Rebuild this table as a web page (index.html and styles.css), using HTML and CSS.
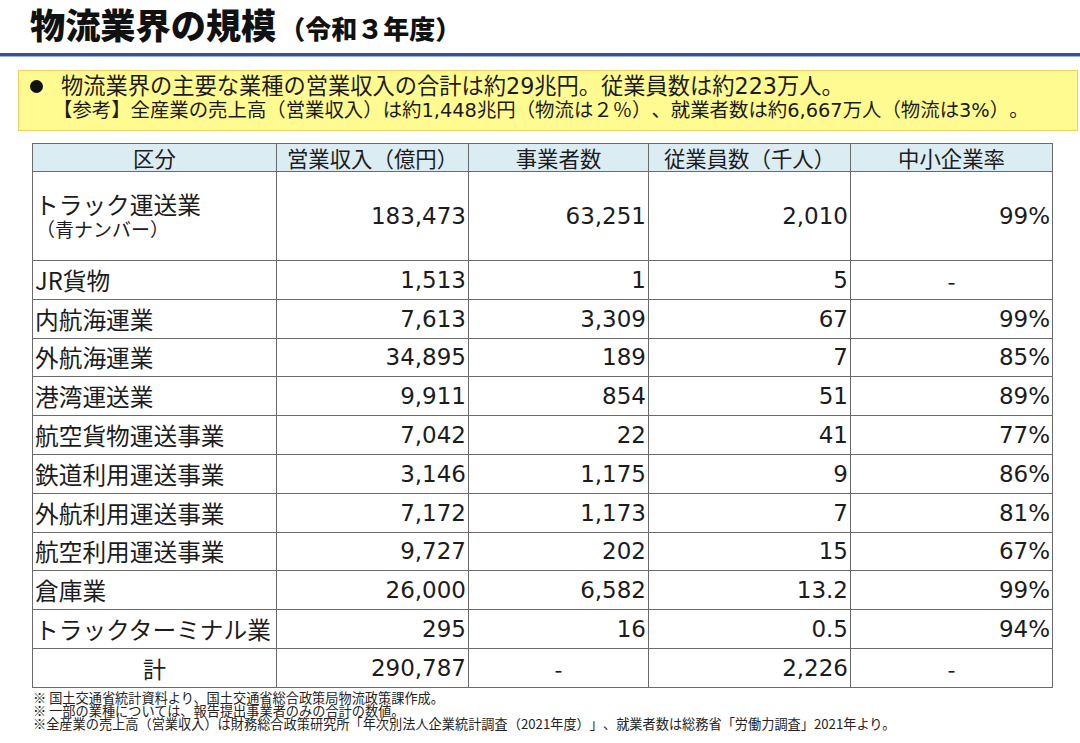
FILE: index.html
```html
<!DOCTYPE html>
<html lang="ja">
<head>
<meta charset="utf-8">
<title>物流業界の規模</title>
<link rel="stylesheet" href="styles.css">
</head>
<body>
<header class="title">
  <h1><span class="main">物流業界の規模</span><span class="sub">（令和３年度）</span></h1>
</header>
<div class="rule"></div>
<section class="notice">
  <span class="bullet"></span>
  <div class="notice-text">
    <p class="l1">物流業界の主要な業種の営業収入の合計は約29兆円。従業員数は約223万人。</p>
    <p class="l2">【参考】全産業の売上高（営業収入）は約1,448兆円（物流は２％）、就業者数は約6,667万人（物流は3%）。</p>
  </div>
</section>
<table class="data">
  <colgroup>
    <col class="c1"><col class="c2"><col class="c3"><col class="c4"><col class="c5">
  </colgroup>
  <thead>
    <tr class="head"><th>区分</th><th>営業収入（億円）</th><th>事業者数</th><th>従業員数（千人）</th><th>中小企業率</th></tr>
  </thead>
  <tbody>
    <tr class="tall"><td class="label"><span class="lname">トラック運送業</span><span class="lsub">（青ナンバー）</span></td><td class="num">183,473</td><td class="num">63,251</td><td class="num">2,010</td><td class="num">99%</td></tr>
    <tr><td class="label">JR貨物</td><td class="num">1,513</td><td class="num">1</td><td class="num">5</td><td class="center">-</td></tr>
    <tr><td class="label">内航海運業</td><td class="num">7,613</td><td class="num">3,309</td><td class="num">67</td><td class="num">99%</td></tr>
    <tr><td class="label">外航海運業</td><td class="num">34,895</td><td class="num">189</td><td class="num">7</td><td class="num">85%</td></tr>
    <tr><td class="label">港湾運送業</td><td class="num">9,911</td><td class="num">854</td><td class="num">51</td><td class="num">89%</td></tr>
    <tr><td class="label">航空貨物運送事業</td><td class="num">7,042</td><td class="num">22</td><td class="num">41</td><td class="num">77%</td></tr>
    <tr><td class="label">鉄道利用運送事業</td><td class="num">3,146</td><td class="num">1,175</td><td class="num">9</td><td class="num">86%</td></tr>
    <tr><td class="label">外航利用運送事業</td><td class="num">7,172</td><td class="num">1,173</td><td class="num">7</td><td class="num">81%</td></tr>
    <tr><td class="label">航空利用運送事業</td><td class="num">9,727</td><td class="num">202</td><td class="num">15</td><td class="num">67%</td></tr>
    <tr><td class="label">倉庫業</td><td class="num">26,000</td><td class="num">6,582</td><td class="num">13.2</td><td class="num">99%</td></tr>
    <tr><td class="label">トラックターミナル業</td><td class="num">295</td><td class="num">16</td><td class="num">0.5</td><td class="num">94%</td></tr>
    <tr><td class="center">計</td><td class="num">290,787</td><td class="center">-</td><td class="num">2,226</td><td class="center">-</td></tr>
  </tbody>
</table>
<div class="notes">
  <p>※ 国土交通省統計資料より、国土交通省総合政策局物流政策課作成。</p>
  <p>※ 一部の業種については、報告提出事業者のみの合計の数値。</p>
  <p>※全産業の売上高（営業収入）は財務総合政策研究所「年次別法人企業統計調査（2021年度）」、就業者数は総務省「労働力調査」2021年より。</p>
</div>
</body>
</html>
```

FILE: styles.css
```css
* { box-sizing: border-box; }
html, body {
  margin: 0;
  padding: 0;
  background: #ffffff;
}
body {
  width: 1080px;
  height: 743px;
  overflow: hidden;
  color: #1c1c1c;
  font-family: "DejaVu Sans", "Noto Sans CJK JP", sans-serif;
  text-spacing-trim: space-all;
}
p { margin: 0; }

.title {
  height: 53px;
  padding: 2px 0 0 30px;
}
.title h1 {
  margin: 0;
  font-family: "Noto Sans CJK JP", sans-serif;
  font-weight: 900;
  line-height: 44px;
  color: #111;
  white-space: nowrap;
}
.title .main { font-size: 35.2px; }
.title .sub { font-size: 26px; margin-left: 3px; }

.rule {
  height: 3px;
  background: #2f5597;
  border-bottom: 1px solid #9fb2d6;
  box-sizing: content-box;
}

.notice {
  margin: 13px 2px 0 18px;
  height: 61px;
  background: #fffb90;
  border: 1.5px solid #f2cf62;
  padding: 2px 0 0 11px;
  display: flex;
  align-items: flex-start;
}
.bullet {
  flex: none;
  width: 13px;
  height: 13px;
  margin-top: 7px;
  border-radius: 50%;
  background: #111;
}
.notice-text {
  margin-left: 18px;
  white-space: nowrap;
}
.notice .l1 {
  font-size: 22.25px;
  line-height: 26px;
}
.notice .l2 {
  font-size: 19.4px;
  line-height: 24px;
  margin-left: -8px;
}

.data {
  margin: 12px 0 0 32px;
  border-collapse: collapse;
  table-layout: fixed;
  width: 1021px;
}
.c1 { width: 244px; }
.c2 { width: 192px; }
.c3 { width: 180px; }
.c4 { width: 202px; }
.c5 { width: 202px; }

.data th, .data td {
  border: 1px solid #6a6a6a;
  padding: 0;
  white-space: nowrap;
}
.data th {
  background: #dbecf3;
  font-weight: 400;
  font-size: 21.4px;
  height: 28px;
  line-height: 26px;
  text-align: center;
  font-family: "Noto Sans CJK JP", sans-serif;
}
.data td {
  height: 38.8px;
  font-size: 23px;
  line-height: 30px;
  vertical-align: middle;
}
.data .tall td { height: 89px; }
.data td.label {
  padding-left: 2px;
  font-size: 23.7px;
  font-family: "Noto Sans CJK JP", sans-serif;
}
.data td.num {
  text-align: right;
  padding-right: 2px;
}
.data td.center {
  text-align: center;
  font-family: "Noto Sans CJK JP", sans-serif;
}
.lname { display: block; line-height: 26px; }
.lsub { display: block; font-size: 19px; line-height: 24px; margin-left: 1px; }

.notes {
  margin: 3px 0 0 33px;
  font-size: 13.2px;
  line-height: 13px;
  color: #222;
  font-family: "Noto Sans CJK JP", sans-serif;
  white-space: nowrap;
}
```
